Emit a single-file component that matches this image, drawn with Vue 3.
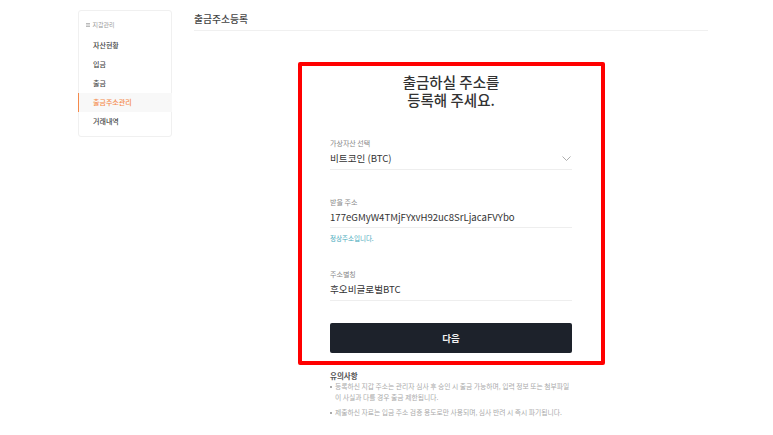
<script setup>
const menu = [
  { label: '자산현황' },
  { label: '입금' },
  { label: '출금' },
  { label: '출금주소관리', active: true },
  { label: '거래내역' }
]
</script>

<template>
  <div class="page">
    <aside class="side">
      <div class="side-head">
        <svg class="side-icon" width="4" height="4" viewBox="0 0 4 4"><path d="M0 .5h4M0 2h4M0 3.5h4" stroke="#aaa" stroke-width=".8" fill="none" /></svg>
        <span>지갑관리</span>
      </div>
      <div v-for="m in menu" :key="m.label" class="side-item" :class="{ active: m.active }">{{ m.label }}</div>
    </aside>
    <main class="main">
      <h1 class="title">출금주소등록</h1>
      <div class="center">
        <section class="card">
          <h2 class="heading">출금하실 주소를<br />등록해 주세요.</h2>
          <div class="field first">
            <div class="label">가상자산 선택</div>
            <div class="value">
              <span>비트코인 (BTC)</span>
              <svg width="9" height="5" viewBox="0 0 9 5"><path d="M.5.5l4 4 4-4" stroke="#999" stroke-width=".8" fill="none" /></svg>
            </div>
          </div>
          <div class="field addr">
            <div class="label">받을 주소</div>
            <div class="value"><span>177eGMyW4TMjFYxvH92uc8SrLjacaFVYbo</span></div>
            <div class="ok">정상주소입니다.</div>
          </div>
          <div class="field alias">
            <div class="label">주소별칭</div>
            <div class="value"><span>후오비글로벌BTC</span></div>
          </div>
          <button class="btn">다음</button>
        </section>
        <section class="notice">
          <div class="notice-title">유의사항</div>
          <p class="notice-line">등록하신 지갑 주소는 관리자 심사 후 승인 시 출금 가능하며, 입력 정보 또는 첨부파일<br />이 사실과 다를 경우 출금 제한됩니다.</p>
          <p class="notice-line">제출하신 자료는 입금 주소 검증 용도로만 사용되며, 심사 반려 시 즉시 파기됩니다.</p>
        </section>
      </div>
    </main>
    <div class="annotation"></div>
  </div>
</template>

<style scoped>
.page {
  position: relative;
  display: flex;
  align-items: flex-start;
  gap: 22px;
  height: 435px;
  padding: 10px 0 0 78px;
  box-sizing: border-box;
  overflow: hidden;
  background: #fff;
  color: #222;
  font-family: "Noto Sans CJK KR", "Noto Sans", sans-serif;
}
.side {
  width: 94px;
  height: 127px;
  box-sizing: border-box;
  border: 1px solid #f0f0f0;
  border-radius: 3px;
  padding-top: 4.5px;
}
.side-head {
  display: flex;
  align-items: center;
  gap: 3px;
  height: 18px;
  margin-bottom: 2px;
  padding-left: 6.5px;
  font-size: 6px;
  color: #999;
}
.side-item {
  height: 19.1px;
  line-height: 19.1px;
  padding-left: 14px;
  font-size: 7px;
  font-weight: 500;
  color: #444;
}
.side-item.active {
  margin: 0 -1px;
  padding-left: 15px;
  color: #f58a4b;
  background: #f8f8f8;
  box-shadow: inset 1px 0 0 #f58a4b;
}
.main { width: 514px; }
.title {
  margin: 0;
  height: 20px;
  line-height: 19px;
  font-size: 9.8px;
  font-weight: 500;
  color: #444;
  border-bottom: 1px solid #f0f0f0;
}
.center { width: 242px; margin: 0 auto; }
.card { padding-top: 42px; }
.heading {
  margin: 0;
  text-align: center;
  font-size: 14.5px;
  line-height: 18px;
  font-weight: 500;
  color: #333;
}
.field .label {
  font-size: 7px;
  line-height: 10px;
  color: #888;
}
.value {
  display: flex;
  justify-content: space-between;
  align-items: center;
  height: 20.5px;
  font-size: 9.6px;
  color: #333;
  border-bottom: 1px solid #eee;
}
.value svg { margin-right: 1px; }
.first { margin-top: 29px; }
.addr { margin-top: 27px; }
.ok {
  margin-top: 5px;
  font-size: 6.5px;
  line-height: 10px;
  color: #3fa9bb;
}
.alias { margin-top: 26px; }
.btn {
  display: block;
  width: 100%;
  height: 30px;
  margin-top: 22px;
  border: 0;
  border-radius: 2px;
  background: #1d222b;
  color: #f0f0f0;
  font-family: inherit;
  font-size: 9.5px;
  font-weight: 700;
}
.notice { margin-top: 17.5px; }
.notice-title {
  font-size: 7.5px;
  line-height: 11px;
  font-weight: 700;
  color: #555;
}
.notice-line {
  position: relative;
  margin: 0 0 4px;
  padding-left: 5px;
  font-size: 6.8px;
  line-height: 11px;
  color: #aaa;
  white-space: nowrap;
}
.notice-line::before {
  content: "";
  position: absolute;
  left: 0;
  top: 5px;
  width: 1.5px;
  height: 1.5px;
  background: #aaa;
}
.annotation {
  position: absolute;
  left: 298px;
  top: 62px;
  width: 307px;
  height: 303px;
  box-sizing: border-box;
  border: 4px solid #f00;
  border-radius: 2px;
}
</style>
